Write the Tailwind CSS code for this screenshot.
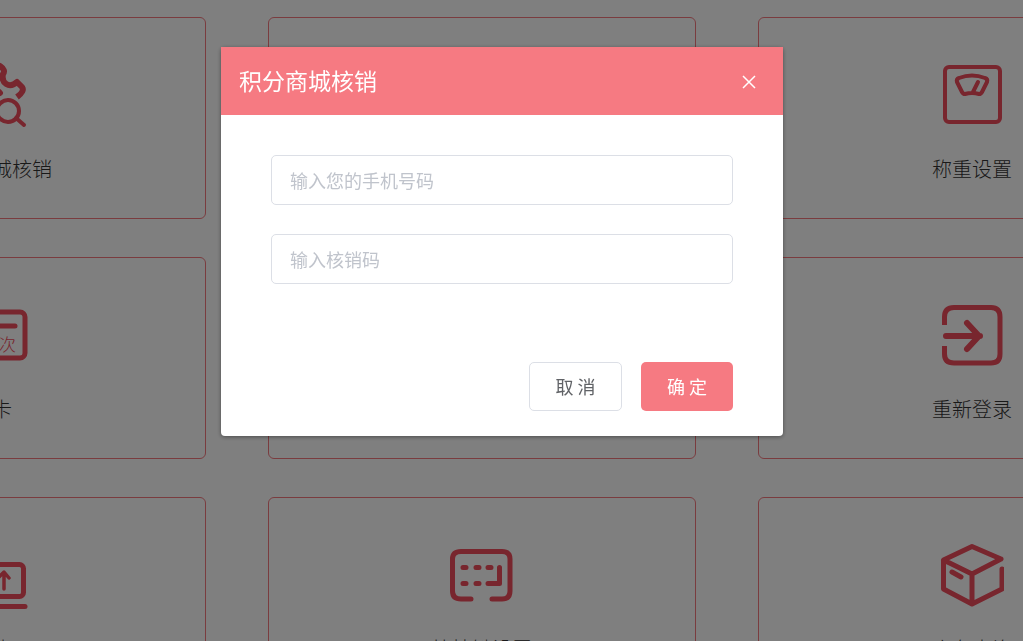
<!DOCTYPE html>
<html lang="zh-CN">
<head>
  <meta charset="UTF-8" />
  <meta name="viewport" content="width=device-width, initial-scale=1.0" />
  <title>积分商城核销</title>
  <script src="https://cdn.jsdelivr.net/npm/@tailwindcss/browser@4"></script>
</head>
<body class="h-screen overflow-hidden bg-white font-['Noto_Sans_CJK_SC',sans-serif] text-[#333]">
  <!-- Menu grid, wider than the window on both sides -->
  <main class="-ml-[222px] -mr-[163px] grid grid-cols-3 gap-x-[62px] gap-y-[38px] pt-[17px] text-xl leading-7 font-light">
    <a href="#" class="flex h-[202px] flex-col items-center rounded-md border border-[#f5787f] pt-[45px]">
      <svg class="h-16 w-[70px] overflow-visible text-[#f04c5c]" viewBox="0 0 70 64" fill="none" stroke="currentColor" stroke-width="6" stroke-linecap="round" stroke-linejoin="round">
        <path d="M30 58 L24 58 L24 50 C21 44 14 42 9 45 L3 38 C8 33 8 27 3 22 L10 12 C16 14 22 12 24 3 L38 1 L43 3 Q49 7 46 11 C44 20 52 26 60 19 L65 24 Q68 28 60 34" stroke-linecap="butt" />
        <path d="M28 35 C28 27 38 25 43 30" />
        <circle cx="51" cy="48" r="11" stroke-width="4" />
        <path d="M59 55 L67 62" stroke-width="4" />
      </svg>
      <span class="mt-[28px]">积分商城核销</span>
    </a>
    <a href="#" class="h-[202px] rounded-md border border-[#f5787f]"></a>
    <a href="#" class="flex h-[202px] flex-col items-center rounded-md border border-[#f5787f] pt-[45px]">
      <svg class="h-16 w-16 text-[#f04c5c]" viewBox="0 0 64 64" fill="none" stroke="currentColor" stroke-width="4" stroke-linecap="round" stroke-linejoin="round">
        <rect x="5" y="4" width="55" height="55" rx="4" />
        <path d="M22 29 L17 19 Q16 16 19 15 Q32 10 45 15 Q48 16 47 19 L42 29 Q41 31 39 31 Q32 29 25 31 Q23 31 22 29 Z M33 29 L38 19" />
      </svg>
      <span class="mt-[28px]">称重设置</span>
    </a>

    <a href="#" class="flex h-[202px] flex-col items-center rounded-md border border-[#f5787f] pt-[45px]">
      <svg class="h-16 w-[72px] text-[#f04c5c]" viewBox="0 0 72 64" fill="none" stroke="currentColor" stroke-width="5" stroke-linecap="round">
        <rect x="3" y="9" width="66" height="46" rx="5" />
        <path d="M14 23 H59" />
        <text x="43" y="48" font-size="17" fill="currentColor" stroke="none">次</text>
      </svg>
      <span class="mt-[28px]">次卡</span>
    </a>
    <a href="#" class="h-[202px] rounded-md border border-[#f5787f]"></a>
    <a href="#" class="flex h-[202px] flex-col items-center rounded-md border border-[#f5787f] pt-[45px]">
      <svg class="h-16 w-16 text-[#f04c5c]" viewBox="0 0 64 64" fill="none" stroke="currentColor" stroke-width="5" stroke-linejoin="round">
        <path d="M4.500 22 V14 Q4.500 4.500 14 4.500 H51 Q60 4.500 60 14 V51 Q60 60 51 60 H14 Q4.500 60 4.500 51 V43" />
        <path d="M6 33 H40 M27 20 L39 33 L27 46" stroke-width="6" stroke-linecap="round" />
      </svg>
      <span class="mt-[28px]">重新登录</span>
    </a>

    <a href="#" class="flex h-[202px] flex-col items-center rounded-md border border-[#f5787f] pt-[45px]">
      <svg class="h-16 w-[72px] overflow-visible text-[#f04c5c]" viewBox="0 0 72 64" fill="none" stroke="currentColor" stroke-width="5" stroke-linecap="round" stroke-linejoin="round">
        <rect x="5" y="21.500" width="62.500" height="32" rx="4" />
        <path d="M3 63.500 H69" />
        <path d="M48 46 V30 M42 35 L48 29 L53 35" stroke-width="3.500" />
      </svg>
      <span class="mt-[28px]">交班</span>
    </a>
    <a href="#" class="flex h-[202px] flex-col items-center rounded-md border border-[#f5787f] pt-[45px]">
      <svg class="h-16 w-16 text-[#f04c5c]" viewBox="0 0 64 64" fill="none" stroke="currentColor" stroke-width="5" stroke-linecap="round" stroke-linejoin="round">
        <path d="M21 56 H11 Q2.500 56 2.500 48 V16 Q2.500 8.500 11 8.500 H52 Q60 8.500 60 16 V48 Q60 56 52 56 H42" />
        <path d="M13 24.500 H16 M26 24.500 H29 M38 24.500 H41 M13 40.500 H16 M26 40.500 H29 M38 40.500 H49.500 V24.500" />
      </svg>
      <span class="mt-[28px]">快捷键设置</span>
    </a>
    <a href="#" class="flex h-[202px] flex-col items-center rounded-md border border-[#f5787f] pt-[45px]">
      <svg class="h-16 w-16 text-[#f04c5c]" viewBox="0 0 64 64" fill="none" stroke="currentColor" stroke-width="5" stroke-linecap="round" stroke-linejoin="round">
        <path d="M61 16 L32 3.500 L3.500 17 V46 L32 61 L62 46 V26 M3.500 17 L32 31 L61 16 M32 31 V61" />
        <path d="M12 29 L21 34" />
      </svg>
      <span class="mt-[28px]">库存查询</span>
    </a>
  </main>

  <!-- Dialog -->
  <div class="fixed inset-0 flex items-start justify-center bg-black/50 pr-[19px] pt-[47px]">
    <section role="dialog" aria-modal="true" aria-labelledby="dialogTitle" class="w-full max-w-[562px] rounded-sm bg-white shadow-[0_1px_4px_rgba(0,0,0,0.4)]">
      <header class="flex h-[68px] items-center justify-between bg-[#f67a82] pl-[18px] pr-[22px] text-white">
        <h2 id="dialogTitle" class="pb-0.5 text-[23px] leading-8">积分商城核销</h2>
        <button type="button" aria-label="关闭" class="flex h-6 w-6 items-center justify-center">
          <svg class="h-4 w-4" viewBox="0 0 16 16" fill="none" stroke="currentColor" stroke-width="1.500">
            <path d="M2 3 L14 15 M14 3 L2 15" />
          </svg>
        </button>
      </header>
      <form class="px-[50px] pb-[25px] pt-10 text-lg">
        <input type="tel" aria-label="手机号码" placeholder="输入您的手机号码" class="block h-[50px] w-full rounded-[5px] border border-[#dcdfe6] px-[18px] placeholder:text-[#c0c4cc]" />
        <input type="text" aria-label="核销码" placeholder="输入核销码" class="mt-[29px] block h-[50px] w-full rounded-[5px] border border-[#dcdfe6] px-[18px] placeholder:text-[#c0c4cc]" />
        <div class="mt-[78px] flex justify-end gap-[19px]">
          <button type="button" class="h-[49px] w-[93px] rounded-[5px] border border-[#dcdfe6] pb-0.5 text-[#606266]">取 消</button>
          <button type="submit" class="h-[49px] w-[92px] rounded-[5px] bg-[#f67a82] pb-0.5 text-white">确 定</button>
        </div>
      </form>
    </section>
  </div>
</body>
</html>
